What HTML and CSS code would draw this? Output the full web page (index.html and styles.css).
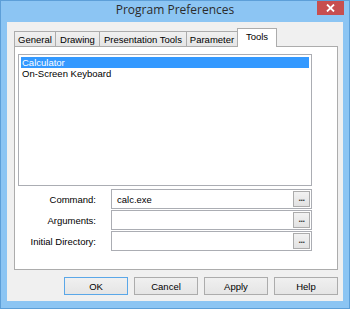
FILE: index.html
```html
<!DOCTYPE html>
<html>
<head>
<meta charset="utf-8">
<link rel="stylesheet" href="styles.css">
</head>
<body>
<div class="window">
  <div class="titlebar">
    <span></span>
    <span class="title">Program Preferences</span>
    <span class="close"><svg width="9" height="8" viewBox="0 0 9 8"><path d="M1 0.5 L8 7.5 M8 0.5 L1 7.5" stroke="#fff" stroke-width="1.8"/></svg></span>
  </div>
  <div class="client">
    <div class="tabs">
      <div class="tab t-general">General</div>
      <div class="tab t-drawing">Drawing</div>
      <div class="tab t-pres">Presentation Tools</div>
      <div class="tab t-param">Parameter</div>
      <div class="tab active t-tools">Tools</div>
    </div>
    <div class="panel">
      <div class="listbox">
        <div class="item sel">Calculator</div>
        <div class="item">On-Screen Keyboard</div>
      </div>
      <div class="form">
        <div class="label">Command:</div>
        <div class="field"><span class="input">calc.exe</span><span class="browse">...</span></div>
        <div class="label">Arguments:</div>
        <div class="field"><span class="input"></span><span class="browse">...</span></div>
        <div class="label">Initial Directory:</div>
        <div class="field"><span class="input"></span><span class="browse">...</span></div>
      </div>
    </div>
    <div class="buttons">
      <div class="btn default">OK</div>
      <div class="btn">Cancel</div>
      <div class="btn">Apply</div>
      <div class="btn">Help</div>
    </div>
  </div>
</div>
</body>
</html>
```
FILE: styles.css
```css
* { box-sizing: border-box; }
html, body { margin: 0; padding: 0; }
body {
  width: 350px;
  height: 309px;
  overflow: hidden;
  font-family: "Liberation Sans", Arial, sans-serif;
  font-size: 9.5px;
  color: #000;
}
.window {
  width: 350px;
  height: 309px;
  background: #8cc5f3;
  border: 1px solid #5d9fd8;
  padding: 0 6px 7px 6px;
  display: flex;
  flex-direction: column;
}
.titlebar {
  height: 21px;
  display: grid;
  grid-template-columns: 1fr auto 1fr;
  align-items: start;
}
.title {
  font-family: "Open Sans", "Noto Sans", sans-serif;
  font-size: 12px;
  color: #2b2b2b;
  line-height: 18px;
}
.close {
  justify-self: end;
  width: 27px;
  height: 14px;
  background: #c74f4f;
  display: flex;
  align-items: center;
  justify-content: center;
  margin-right: -1px;
}
.client {
  flex: 1;
  background: #f0f0f0;
  padding: 6px 5px 0 7px;
  display: flex;
  flex-direction: column;
}
.tabs {
  display: flex;
  align-items: flex-end;
  height: 18px;
  padding-left: 0;
}
.tab {
  height: 15px;
  border: 1px solid #acacac;
  border-bottom: none;
  margin-right: -1px;
  background: linear-gradient(#f0f0f0, #e5e5e5);
  display: flex;
  align-items: center;
  justify-content: center;
  padding-top: 1px;
}
.tab.active {
  height: 19px;
  margin-bottom: -1px;
  background: #fff;
  position: relative;
  z-index: 1;
  padding-bottom: 4px;
}
.t-general { width: 42px; margin-left: 0; }
.t-drawing { width: 45px; }
.t-pres { width: 88px; }
.t-param { width: 52px; }
.t-tools { width: 40px; }
.panel {
  width: 324px;
  height: 224px;
  border: 1px solid #acacac;
  background: #fff;
  padding: 7px 25px 0 3px;
  display: flex;
  flex-direction: column;
}
.listbox {
  height: 132px;
  border: 1px solid #abadb3;
  padding: 2px 2px;
}
.item {
  height: 11px;
  line-height: 11px;
  padding-left: 1px;
  white-space: nowrap;
}
.item.sel {
  background: #3399ff;
  color: #fff;
}
.form {
  margin-top: 3px;
  display: grid;
  grid-template-columns: 78px 201px;
  column-gap: 15px;
  row-gap: 1px;
  align-items: center;
}
.label {
  text-align: right;
}
.field {
  height: 20px;
  border: 1px solid #abadb3;
  background: #fff;
  display: flex;
  align-items: center;
  padding-right: 1px;
}
.input {
  flex: 1;
  padding-left: 5px;
}
.browse {
  width: 17px;
  height: 16px;
  border: 1px solid #acacac;
  background: linear-gradient(#f2f2f2, #e2e2e2);
  color: #333;
  font-size: 9px;
  font-weight: bold;
  letter-spacing: -0.5px;
  display: flex;
  justify-content: center;
  align-items: flex-end;
  line-height: 13px;
  padding-bottom: 1px;
}
.buttons {
  margin-top: 7px;
  display: flex;
  justify-content: flex-end;
  gap: 6px;
  padding-right: 0;
}
.btn {
  width: 64px;
  height: 18px;
  border: 1px solid #acacac;
  background: linear-gradient(#f0f0f0, #e5e5e5);
  display: flex;
  align-items: center;
  justify-content: center;
}
.btn.default {
  border-color: #5aa7e8;
}
```
